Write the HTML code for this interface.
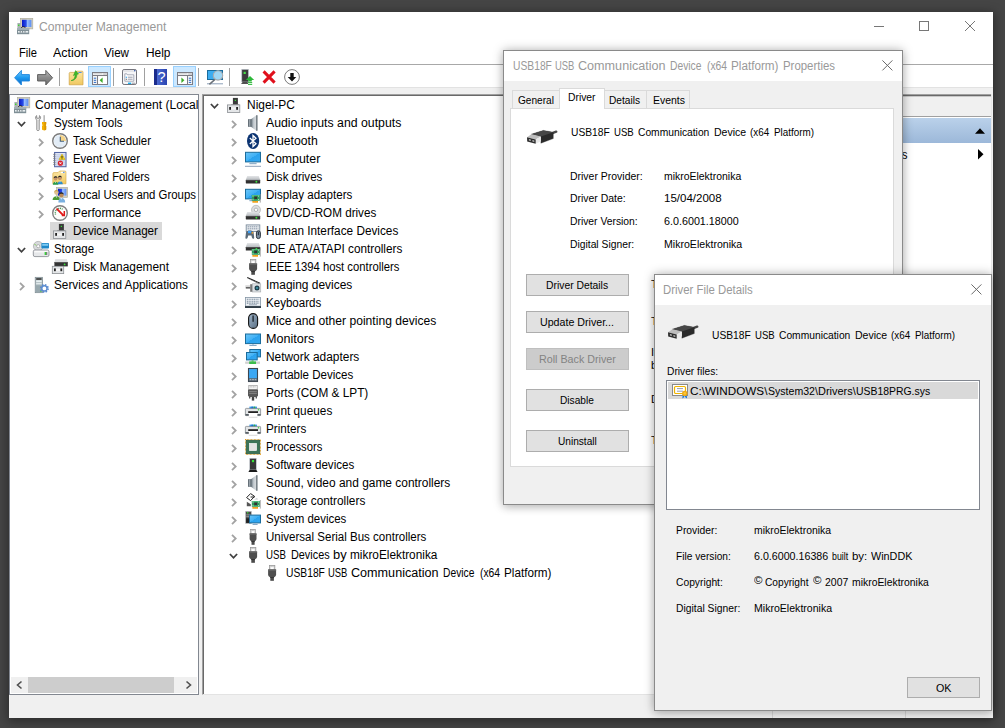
<!DOCTYPE html>
<html><head><meta charset="utf-8"><title>Computer Management</title>
<style>
html,body{margin:0;padding:0}
body{width:1005px;height:728px;overflow:hidden;background:#454545;position:relative;font-family:"Liberation Sans",sans-serif}
#win{position:absolute;left:9px;top:12px;width:984px;height:706px;background:#fff;box-shadow:0 2px 10px 1px rgba(0,0,0,.4)}
.t{position:absolute;white-space:nowrap;line-height:16px;height:16px;color:#000;transform-origin:0 50%}
.t.s{font-size:12px}
.t.d{font-size:11px}
.ic{position:absolute;overflow:visible}
div.ic{width:16px;height:16px}
.hl{position:absolute;height:1px}
.dlg{position:absolute;background:#f0f0f0;border:1px solid #8a8a8a;box-sizing:border-box;box-shadow:0 0 10px rgba(0,0,0,.28),0 3px 8px rgba(0,0,0,.1)}
.tbar{background:#fff}
.btn{position:absolute;box-sizing:border-box;background:#e1e1e1;border:1px solid #adadad;font-size:11px;line-height:20px;text-align:center;color:#000}
.btn.dis{background:#cccccc;border-color:#bfbfbf;color:#838383}
.desc{position:absolute;font-size:11px;line-height:13px;white-space:nowrap;color:#000}
</style></head>
<body>

<svg width="0" height="0" style="position:absolute"><defs>
<linearGradient id="gScr" x1="0" y1="0" x2="1" y2="0"><stop offset="0" stop-color="#0818c8"/><stop offset=".45" stop-color="#2a50e8"/><stop offset=".55" stop-color="#9cc0ff"/><stop offset="1" stop-color="#5a8cf0"/></linearGradient>
<linearGradient id="gBlue" x1="0" y1="0" x2="1" y2="1"><stop offset="0" stop-color="#6cc6f8"/><stop offset=".5" stop-color="#3fb0f5"/><stop offset=".5" stop-color="#2aa2ee"/><stop offset="1" stop-color="#35a8f0"/></linearGradient>
<linearGradient id="gBack" x1="0" y1="0" x2="0" y2="1"><stop offset="0" stop-color="#7fd0ff"/><stop offset=".5" stop-color="#1e9af0"/><stop offset="1" stop-color="#0a62c0"/></linearGradient>
<linearGradient id="gFwd" x1="0" y1="0" x2="0" y2="1"><stop offset="0" stop-color="#b8b8b8"/><stop offset=".5" stop-color="#8a8a8a"/><stop offset="1" stop-color="#6e6e6e"/></linearGradient>
<linearGradient id="gFold" x1="0" y1="0" x2="0" y2="1"><stop offset="0" stop-color="#fbe7a6"/><stop offset="1" stop-color="#f0c860"/></linearGradient>
<linearGradient id="gSpk" x1="0" y1="0" x2="1" y2="0"><stop offset="0" stop-color="#5c6870"/><stop offset=".35" stop-color="#b8c0c6"/><stop offset=".7" stop-color="#d8dcdf"/><stop offset="1" stop-color="#6a747a"/></linearGradient>
<linearGradient id="gDiskTop" x1="0" y1="0" x2="0" y2="1"><stop offset="0" stop-color="#e4e6e8"/><stop offset="1" stop-color="#b8bcc0"/></linearGradient>
<linearGradient id="gMouse" x1="0" y1="0" x2="1" y2="1"><stop offset="0" stop-color="#9fb4c8"/><stop offset="1" stop-color="#5a6f84"/></linearGradient>
<linearGradient id="gHelp" x1="0" y1="0" x2="1" y2="0"><stop offset="0" stop-color="#1b2c8c"/><stop offset=".22" stop-color="#1b2c8c"/><stop offset=".23" stop-color="#4a68d0"/><stop offset="1" stop-color="#2a44b0"/></linearGradient>
<linearGradient id="gUsb" x1="0" y1="0" x2="0" y2="1"><stop offset="0" stop-color="#555"/><stop offset="1" stop-color="#222"/></linearGradient>
</defs></svg>

<div id="win"></div>
<svg class="ic" style="left:17px;top:18px" width="16" height="16" viewBox="0 0 16 16"><rect x="3.4" y=".3" width="12.4" height="10.6" fill="#d2cfc0" stroke="#aaa898" stroke-width=".6"/><rect x="5" y="1.8" width="9.4" height="7.2" fill="url(#gScr)"/><rect x=".4" y="5" width="3.2" height="5.4" fill="#a8b0b2"/><rect x="1" y="6.6" width="1.4" height="1.4" fill="#3adb2a"/><path d="M4 10.2c1-2 3.6-2 4.6 0" fill="none" stroke="#222" stroke-width="1"/><rect x="0" y="10.2" width="12.2" height="6" fill="#7f8f96"/><rect x="0" y="10.2" width="12.2" height="1.6" fill="#a9b6bb"/><rect x="1" y="13" width="10.2" height="1.6" fill="#e8eef0"/><path d="M3.2 13v1.600M5.600 13v1.600M8 13v1.600" stroke="#5a686e" stroke-width=".8"/></svg>
<span class="t s" style="left:38.5px;top:19px;transform:scaleX(1.0113);color:#999;">Computer Management</span>
<svg class="ic" style="left:860px;top:12px" width="133" height="30" viewBox="0 0 133 30"><g fill="none" stroke="#777" stroke-width="1"><path d="M14 14.5h10"/><rect x="59.5" y="9.5" width="9" height="9"/><path d="M105 9l10 10M115 9l-10 10"/></g></svg>
<span class="t s" style="left:19.3px;top:44.5px;transform:scaleX(0.9305);">File</span>
<span class="t s" style="left:53px;top:44.5px;transform:scaleX(1.0432);">Action</span>
<span class="t s" style="left:104px;top:44.5px;transform:scaleX(0.9691);">View</span>
<span class="t s" style="left:145.5px;top:44.5px;transform:scaleX(0.9924);">Help</span>
<div class="hl" style="left:9px;top:64px;width:984px;background:#a8a8a8"></div>
<div style="position:absolute;left:9px;top:65px;width:984px;height:22px;background:#fff"></div>
<div style="position:absolute;left:9px;top:87px;width:984px;height:8px;background:#f0f0f0;border-top:1px solid #e2e2e2;box-sizing:border-box"></div>
<div style="position:absolute;left:88px;top:66px;width:23px;height:21px;background:#cce8ff;border:1px solid #99d1ff;box-sizing:border-box"></div>
<div style="position:absolute;left:173px;top:66px;width:23px;height:21px;background:#cce8ff;border:1px solid #99d1ff;box-sizing:border-box"></div>
<div style="position:absolute;left:59px;top:68px;width:1px;height:18px;background:#a0a0a0"></div>
<div style="position:absolute;left:113px;top:68px;width:1px;height:18px;background:#a0a0a0"></div>
<div style="position:absolute;left:144px;top:68px;width:1px;height:18px;background:#a0a0a0"></div>
<div style="position:absolute;left:198px;top:68px;width:1px;height:18px;background:#a0a0a0"></div>
<div style="position:absolute;left:229px;top:68px;width:1px;height:18px;background:#a0a0a0"></div>
<svg class="ic" style="left:14px;top:69px" width="16" height="16" viewBox="0 0 16 16"><path d="M.6 8.800L7.400 1.400V5.600H15.400V12H7.400V16z" fill="url(#gBack)" stroke="#1c84dc" stroke-width=".9" stroke-linejoin="round"/></svg>
<svg class="ic" style="left:37px;top:69px" width="16" height="16" viewBox="0 0 16 16"><path d="M15.600 8.800L8.800 1.400V5.600H.6V12H8.800V16z" fill="url(#gFwd)" stroke="#555" stroke-width=".9" stroke-linejoin="round"/></svg>
<svg class="ic" style="left:68px;top:69px" width="16" height="16" viewBox="0 0 16 16"><path d="M1.200 4.400c0-.6.4-1 1-1h5.200l1.400-1.200h5.400c.6 0 .8 .4 .8 1V15.800H1.200z" fill="url(#gFold)" stroke="#cfa040" stroke-width=".7"/><rect x="10.400" y="3" width="3.200" height="1" fill="#4c8ce8"/><path d="M3 11.600c3-.6 4.200-3 4-5.800L5.400 6.600 7.600 1.600 10.600 5 8.800 5.400C9.200 8.800 6.400 11.800 3 11.600z" fill="#3cb82c" stroke="#2c9c20" stroke-width=".5"/></svg>
<svg class="ic" style="left:92px;top:69px" width="16" height="16" viewBox="0 0 16 16"><rect x=".5" y="3.500" width="15" height="12" fill="#f4f4f4" stroke="#7c7c84" stroke-width="1"/><path d="M.5 6.500h15" stroke="#7c7c84" stroke-width="1"/><path d="M1.400 4.800h9" stroke="#c8c8cc" stroke-width=".9"/><path d="M11.600 4.300h1.200v1.200h-1.200zM13.600 4.300h1.200v1.200h-1.200z" fill="#fff" stroke="#9a9aa0" stroke-width=".4"/><path d="M5.500 7v8.500" stroke="#7c7c84" stroke-width="1"/><path d="M1.800 9.200h2.400M1.800 11.300h2.400M1.800 13.400h2.400" stroke="#2c6cc8" stroke-width="1"/><rect x="6.400" y="7.400" width="8.600" height="7.600" fill="#fff"/><path d="M10.600 8.600v5.400L7.600 11.300z" fill="#3cac28"/></svg>
<svg class="ic" style="left:121px;top:69px" width="16" height="16" viewBox="0 0 16 16"><rect x="1.500" y=".5" width="14" height="15" rx="1.600" fill="#f6f6f8" stroke="#74747c" stroke-width="1"/><path d="M2.400 2h11" stroke="#d0d0d6" stroke-width=".9"/><rect x="13" y="1" width="1.400" height="1.400" fill="#4c6cb0"/><path d="M3.800 12.200V4.800h2l.6 1h6.400v6.400z" fill="#fff" stroke="#9498a8" stroke-width=".8"/><path d="M6.800 8.200h4.800M6.800 10.200h4.800" stroke="#8c90a0" stroke-width=".9"/><rect x="4.800" y="7.700" width="1.100" height="1.100" fill="#1c9cf0"/><rect x="4.800" y="9.700" width="1.100" height="1.100" fill="#666"/><rect x="7" y="13.600" width="3.200" height="1.400" fill="#1cb0f0"/><rect x="11" y="13.600" width="3" height="1.400" fill="#b8b8bc"/></svg>
<svg class="ic" style="left:153px;top:69px" width="16" height="16" viewBox="0 0 16 16"><rect x="1" y="0" width="13" height="16" fill="url(#gHelp)"/><text x="8.600" y="13.400" font-family="Liberation Sans, sans-serif" font-size="14.500" fill="#fff" text-anchor="middle">?</text></svg>
<svg class="ic" style="left:177px;top:69px" width="16" height="16" viewBox="0 0 16 16"><rect x=".5" y="3.500" width="15" height="12" fill="#f4f4f4" stroke="#7c7c84" stroke-width="1"/><path d="M.5 6.500h15" stroke="#7c7c84" stroke-width="1"/><path d="M1.400 4.800h9" stroke="#c8c8cc" stroke-width=".9"/><path d="M11.600 4.300h1.200v1.200h-1.200zM13.600 4.300h1.200v1.200h-1.200z" fill="#fff" stroke="#9a9aa0" stroke-width=".4"/><path d="M10.500 7v8.500" stroke="#7c7c84" stroke-width="1"/><path d="M11.800 9.200h2.400M11.800 11.300h2.400M11.800 13.400h2.400" stroke="#2c6cc8" stroke-width="1"/><rect x="1.200" y="7.400" width="8.600" height="7.600" fill="#fff"/><path d="M4.400 8.600v5.400L7.400 11.300z" fill="#3cac28"/></svg>
<svg class="ic" style="left:207px;top:69px" width="16" height="16" viewBox="0 0 16 16"><rect x=".5" y="1.500" width="15" height="9" fill="#3cacf0" stroke="#1b6c9c" stroke-width="1"/><path d="M0 14.800h16" stroke="#8ca0b8" stroke-width="1"/><path d="M2.400 15.400L8 10.400" stroke="#6a7078" stroke-width="1.500"/><circle cx="11" cy="6.400" r="4.700" fill="#a8daf6" stroke="#a8acb0" stroke-width="1.100" fill-opacity=".92"/></svg>
<svg class="ic" style="left:240px;top:69px" width="16" height="16" viewBox="0 0 16 16"><rect x="1.800" y=".4" width="6.600" height="12.600" fill="#3c3c3c" stroke="#b8c0c8" stroke-width=".6"/><rect x="3.600" y="2.800" width="2.200" height="2.200" fill="#48e048"/><path d="M1 14.800l1.600-1.600h5l.6 1.600z" fill="#1a1a1a"/><path d="M10 7l4.200 4H11.800v1.400H8.200V11H5.800z" fill="#2cb838"/><path d="M8 13.600h4.200M8 15.400h4.200" stroke="#2cb838" stroke-width="1"/></svg>
<svg class="ic" style="left:261px;top:69px" width="16" height="16" viewBox="0 0 16 16"><path d="M2.600 2.400L13.600 13.600M13.600 2.400L2.600 13.600" stroke="#e0101c" stroke-width="3"/></svg>
<svg class="ic" style="left:284px;top:69px" width="16" height="16" viewBox="0 0 16 16"><circle cx="8" cy="8" r="7.400" fill="#fff" stroke="#5a5a5a" stroke-width=".8"/><path d="M6.300 4h3.400v4h2.600L8 12.600 3.700 8h2.600z" fill="#111"/></svg>
<div style="position:absolute;left:9px;top:94px;width:190px;height:601px;background:#fff;border:1px solid #828790;box-sizing:border-box"></div>
<div style="position:absolute;left:199px;top:94px;width:4px;height:601px;background:#f0f0f0"></div>
<div style="position:absolute;left:202px;top:94px;width:791px;height:601px;background:#fff;border:1px solid #a0a0a0;border-right:0;border-bottom-color:#e3e3e3;box-sizing:border-box;box-shadow:inset 1px 1px 0 #696969"></div>
<div style="position:absolute;left:9px;top:695px;width:984px;height:23px;background:#f0f0f0"></div>
<div style="position:absolute;left:772px;top:697px;width:1px;height:21px;background:#d7d7d7"></div>
<div style="position:absolute;left:905px;top:697px;width:1px;height:21px;background:#d7d7d7"></div>
<div style="position:absolute;left:11px;top:677px;width:186px;height:16px;background:#f0f0f0"></div>
<div style="position:absolute;left:28px;top:677px;width:146px;height:16px;background:#cdcdcd"></div>
<svg class="ic" style="left:11px;top:677px" width="186" height="16" viewBox="0 0 186 16"><g fill="none" stroke="#505050" stroke-width="1.6"><path d="M10.5 4.5L6.5 8l4 3.5"/><path d="M175.5 4.5l4 3.5-4 3.5"/></g></svg>
<div style="position:absolute;left:10px;top:95px;width:188px;height:582px;overflow:hidden">
<svg class="ic" style="left:4px;top:2px" width="16" height="16" viewBox="0 0 16 16"><rect x="3.4" y=".3" width="12.4" height="10.6" fill="#d2cfc0" stroke="#aaa898" stroke-width=".6"/><rect x="5" y="1.8" width="9.4" height="7.2" fill="url(#gScr)"/><rect x=".4" y="5" width="3.2" height="5.4" fill="#a8b0b2"/><rect x="1" y="6.6" width="1.4" height="1.4" fill="#3adb2a"/><path d="M4 10.2c1-2 3.6-2 4.6 0" fill="none" stroke="#222" stroke-width="1"/><rect x="0" y="10.2" width="12.2" height="6" fill="#7f8f96"/><rect x="0" y="10.2" width="12.2" height="1.6" fill="#a9b6bb"/><rect x="1" y="13" width="10.2" height="1.6" fill="#e8eef0"/><path d="M3.2 13v1.600M5.600 13v1.600M8 13v1.600" stroke="#5a686e" stroke-width=".8"/></svg>
<span class="t s" style="left:25px;top:1.5px;transform:scaleX(1.0081);">Computer Management (Local</span>
<svg class="ic" style="left:23px;top:20px" width="16" height="16" viewBox="0 0 16 16"><path d="M3.700 .6C2.400 1.200 2.100 3 3.100 4.300L3.800 5V14.800c0 1.100 2.400 1.100 2.400 0V5l.8-.7C8 3 7.700 1.200 6.400 .6V3.200H3.700z" fill="#ececec" stroke="#868686" stroke-width=".9"/><rect x="10.600" y=".2" width="1" height="7.200" fill="#8e8e8e"/><path d="M9 6.900h4.200v2.300l-.7 .9.700 .9v3.300c0 1.400-4.200 1.400-4.200 0V11l.7-.9-.7-.9z" fill="#f4b000"/><path d="M11.400 6.900h1.800v2.300l-.7 .9.700 .9v3.300c0 .7-.9 1-1.800 1.100z" fill="#d89400"/></svg>
<svg class="ic" style="left:7px;top:25.5px" width="10" height="6" viewBox="0 0 10 6"><path d="M0.900 1L4.500 4.800L8.100 1" fill="none" stroke="#404040" stroke-width="1.800"/></svg>
<span class="t s" style="left:44px;top:19.5px;transform:scaleX(0.9629);">System Tools</span>
<svg class="ic" style="left:42px;top:38px" width="16" height="16" viewBox="0 0 16 16"><circle cx="8" cy="8" r="7.300" fill="#f4f8fc" stroke="#7c7c7c" stroke-width="1.400"/><circle cx="8" cy="8" r="6" fill="#e2ecf6"/><path d="M8 8V2h.2A6 6 0 0 1 14 8z" fill="#f6d488"/><circle cx="8" cy="8" r="4.600" fill="none" stroke="#fff" stroke-width=".01"/><path d="M8.300 3.800V8.300H12" fill="none" stroke="#44607c" stroke-width="1.100"/></svg>
<svg class="ic" style="left:28px;top:43px" width="6" height="10" viewBox="0 0 6 10"><path d="M1 0.900L4.700 4.500L1 8.100" fill="none" stroke="#a3a3a3" stroke-width="1.800"/></svg>
<span class="t s" style="left:63px;top:37.5px;transform:scaleX(0.9507);">Task Scheduler</span>
<svg class="ic" style="left:42px;top:56px" width="16" height="16" viewBox="0 0 16 16"><g transform="translate(0,.9)"><rect x="2.600" y=".6" width="11.400" height="14.200" fill="#e6ecf8" stroke="#5668a6" stroke-width="1.100"/><path d="M4 3h9M4 5h9M4 7h9M4 9h9M4 11h9M4 13h9" stroke="#a8b6da" stroke-width=".8"/><path d="M1.400 2.500h2M1.400 4.500h2M1.400 6.500h2M1.400 8.500h2M1.400 10.500h2M1.400 12.500h2" stroke="#777" stroke-width="1"/><path d="M10 2.200L13.100 7.600H6.900z" fill="#f4d21c" stroke="#c8a400" stroke-width=".5"/><path d="M10 4v2" stroke="#222" stroke-width="1"/><circle cx="10" cy="6.900" r=".5" fill="#222"/><circle cx="8.400" cy="11.300" r="2.600" fill="#d8202c"/><path d="M7.400 10.300l2 2M9.400 10.300l-2 2" stroke="#fff" stroke-width=".9"/></g></svg>
<svg class="ic" style="left:28px;top:61px" width="6" height="10" viewBox="0 0 6 10"><path d="M1 0.900L4.700 4.500L1 8.100" fill="none" stroke="#a3a3a3" stroke-width="1.800"/></svg>
<span class="t s" style="left:63px;top:55.5px;transform:scaleX(0.9506);">Event Viewer</span>
<svg class="ic" style="left:42px;top:74px" width="16" height="16" viewBox="0 0 16 16"><g transform="translate(0,1.200)"><path d="M.8 3.600c0-.8.4-1.200 1.200-1.200h4l1.600-1.600h5.400c.6 0 1 .4 1 1V13.600H.8z" fill="url(#gFold)" stroke="#d4a43c" stroke-width=".6"/><rect x="8.800" y="1.500" width="4" height="1.300" rx=".5" fill="#fff"/><rect x="11" y="1.600" width="1.600" height="1" fill="#3c82e6"/><circle cx="3.600" cy="8.400" r="1.900" fill="#c89468"/><path d="M1.700 8c0-2.600 3.800-2.600 3.800 0-.6-1-3.200-1-3.800 0z" fill="#222"/><path d="M.8 14.600c0-4 5.600-4 5.600 0z" fill="#2a9c4c"/><circle cx="7.900" cy="8" r="1.900" fill="#c89468"/><path d="M6 7.600c0-2.600 3.800-2.600 3.800 0-.6-1-3.200-1-3.800 0z" fill="#222"/><path d="M5.600 14c0-4 5.200-4 5.200 0z" fill="#2a8ccc"/><path d="M3 11.500l.6 1.500.6-1.500zM7.400 11l.6 1.500.6-1.500z" fill="#fff"/></g></svg>
<svg class="ic" style="left:28px;top:79px" width="6" height="10" viewBox="0 0 6 10"><path d="M1 0.900L4.700 4.500L1 8.100" fill="none" stroke="#a3a3a3" stroke-width="1.800"/></svg>
<span class="t s" style="left:63px;top:73.5px;transform:scaleX(0.9324);">Shared Folders</span>
<svg class="ic" style="left:42px;top:92px" width="16" height="16" viewBox="0 0 16 16"><rect x="4.600" y=".4" width="11" height="10" fill="#d2cfc0" stroke="#aaa898" stroke-width=".6"/><rect x="6" y="1.800" width="8.400" height="6.800" fill="url(#gScr)"/><circle cx="4.400" cy="5.600" r="2.200" fill="#e0c090"/><path d="M2.200 5.200c0-3 4.400-3 4.400 0-.8-1.200-3.600-1.200-4.400 0z" fill="#c8a040"/><path d="M.6 13c0-5 7.400-5 7.400 0z" fill="#4c9a34"/><circle cx="9.400" cy="8" r="2.300" fill="#b88858"/><path d="M7.100 7.600c0-3.200 4.600-3.200 4.600 0-.8-1.200-3.800-1.200-4.600 0z" fill="#222"/><path d="M6.400 15.400c-.6-6 7-6 6.800 0z" fill="#7ab0e0"/><path d="M3.800 9.400l.6 1.600.6-1.600zM8.800 11.200l.6 1.600.6-1.600z" fill="#fff"/></svg>
<svg class="ic" style="left:28px;top:97px" width="6" height="10" viewBox="0 0 6 10"><path d="M1 0.900L4.700 4.500L1 8.100" fill="none" stroke="#a3a3a3" stroke-width="1.800"/></svg>
<span class="t s" style="left:63px;top:91.5px;transform:scaleX(0.9505);">Local Users and Groups</span>
<svg class="ic" style="left:42px;top:110px" width="16" height="16" viewBox="0 0 16 16"><circle cx="8" cy="8" r="7.300" fill="#fdfdfb" stroke="#808080" stroke-width="1.400"/><path d="M3.600 9.600A4.600 4.600 0 0 1 10.600 4.200" fill="none" stroke="#3c8c4c" stroke-width="1.400" stroke-dasharray="1 .8"/><path d="M12.300 6v4.400H9.800" fill="none" stroke="#e01818" stroke-width="1.500"/><path d="M4.600 3.600L11.400 10.400" stroke="#e01818" stroke-width="1.900"/></svg>
<svg class="ic" style="left:28px;top:115px" width="6" height="10" viewBox="0 0 6 10"><path d="M1 0.900L4.700 4.500L1 8.100" fill="none" stroke="#a3a3a3" stroke-width="1.800"/></svg>
<span class="t s" style="left:63px;top:109.5px;transform:scaleX(0.9898);">Performance</span>
<div style="position:absolute;left:40px;top:127px;width:112px;height:18px;background:#d9d9d9"></div>
<svg class="ic" style="left:42px;top:128px" width="16" height="16" viewBox="0 0 16 16"><rect x="6.900" y=".9" width="5" height="7" fill="#3a3a3a"/><rect x="8.800" y="2.800" width="1.200" height="1.200" fill="#38e038"/><path d="M5.200 7.700h8" stroke="#777" stroke-width=".8"/><rect x="1.400" y="7.900" width="12.400" height="7.600" fill="#e4e6e8" stroke="#8c9094" stroke-width=".8"/><rect x="3.200" y="10" width="1.800" height="2.800" fill="#222"/><rect x="10.200" y="10" width="1.800" height="2.800" fill="#222"/><rect x="5.400" y="10.600" width="4.400" height="1.800" fill="#f6f6f6"/></svg>
<span class="t s" style="left:63px;top:127.5px;transform:scaleX(0.9728);">Device Manager</span>
<svg class="ic" style="left:23px;top:146px" width="16" height="16" viewBox="0 0 16 16"><circle cx="5.200" cy="5.200" r="4.800" fill="#d8dadc" stroke="#9a9c9e" stroke-width=".6"/><circle cx="5.200" cy="5.200" r="1.600" fill="#fff" stroke="#8a8c8e" stroke-width=".6"/><path d="M1.400 3.400l2 .8" stroke="#7ccc50" stroke-width=".8"/><rect x="8.400" y="2" width="7.600" height="5.600" rx=".8" fill="#1e88c8"/><rect x="9.200" y="2.800" width="6" height="2" fill="#7cc8f0"/><rect x=".3" y="9" width="15.700" height="6.600" rx="1.600" fill="#e6e8ea" stroke="#80848a" stroke-width=".8"/><rect x="1.400" y="9.800" width="13.400" height="1.600" fill="#fafafa"/><rect x="11.600" y="11" width="1.800" height="3" fill="#3ccc3c"/><rect x="13.400" y="11" width=".8" height="3" fill="#555"/></svg>
<svg class="ic" style="left:7px;top:151.5px" width="10" height="6" viewBox="0 0 10 6"><path d="M0.900 1L4.500 4.800L8.100 1" fill="none" stroke="#404040" stroke-width="1.800"/></svg>
<span class="t s" style="left:44px;top:145.5px;transform:scaleX(0.9517);">Storage</span>
<svg class="ic" style="left:42px;top:164px" width="16" height="16" viewBox="0 0 16 16"><path d="M3.200 .2h11.600l1 3H2.400z" fill="#dcdee0"/><rect x="2.400" y="3.200" width="13.400" height="4.200" fill="#333"/><rect x="2.400" y="3.200" width="13.400" height=".8" fill="#555"/><circle cx="12.600" cy="5.400" r=".9" fill="#3ce03c"/><rect x=".3" y="7.300" width="11.400" height="7.300" fill="#e4e6e8" stroke="#8c9094" stroke-width=".8"/><rect x="2" y="9.400" width="1.800" height="2.800" fill="#222"/><rect x="8.400" y="9.400" width="1.800" height="2.800" fill="#222"/><rect x="4.200" y="10" width="3.800" height="1.800" fill="#f8f8f8"/></svg>
<span class="t s" style="left:63px;top:163.5px;transform:scaleX(0.9926);">Disk Management</span>
<svg class="ic" style="left:23px;top:182px" width="16" height="16" viewBox="0 0 16 16"><rect x="2.200" y=".3" width="7.400" height="15.400" fill="#b8c4c8" stroke="#7a888e" stroke-width=".7"/><rect x="3.200" y="1.200" width="5.400" height="1.600" fill="#333"/><rect x="3.200" y="3.400" width="5.400" height="1.600" fill="#e8f0f2"/><rect x="3.200" y="6" width="5.400" height="1.200" fill="#dfe8ea"/><rect x="2.600" y="8.200" width="6.600" height="7" fill="#98a8ae"/><rect x="7" y="13.400" width="1.600" height="1.200" fill="#40d040"/><circle cx="11.400" cy="11.400" r="3.400" fill="none" stroke="#5c8cd0" stroke-width="2.200" stroke-dasharray="1.400 1.270"/><circle cx="11.400" cy="11.400" r="2.600" fill="#fff" stroke="#5c8cd0" stroke-width="1.400"/></svg>
<svg class="ic" style="left:9px;top:187px" width="6" height="10" viewBox="0 0 6 10"><path d="M1 0.900L4.700 4.500L1 8.100" fill="none" stroke="#a3a3a3" stroke-width="1.800"/></svg>
<span class="t s" style="left:44px;top:181.5px;transform:scaleX(0.9799);">Services and Applications</span>
</div>
<svg class="ic" style="left:226px;top:97px" width="16" height="16" viewBox="0 0 16 16"><rect x="6.900" y=".9" width="5" height="7" fill="#3a3a3a"/><rect x="8.800" y="2.800" width="1.200" height="1.200" fill="#38e038"/><path d="M5.200 7.700h8" stroke="#777" stroke-width=".8"/><rect x="1.400" y="7.900" width="12.400" height="7.600" fill="#e4e6e8" stroke="#8c9094" stroke-width=".8"/><rect x="3.200" y="10" width="1.800" height="2.800" fill="#222"/><rect x="10.200" y="10" width="1.800" height="2.800" fill="#222"/><rect x="5.400" y="10.600" width="4.400" height="1.800" fill="#f6f6f6"/></svg>
<svg class="ic" style="left:210px;top:102.5px" width="10" height="6" viewBox="0 0 10 6"><path d="M0.900 1L4.500 4.800L8.100 1" fill="none" stroke="#404040" stroke-width="1.800"/></svg>
<span class="t s" style="left:246.7px;top:96.5px;transform:scaleX(0.9955);">Nigel-PC</span>
<svg class="ic" style="left:245px;top:115px" width="16" height="16" viewBox="0 0 16 16"><rect x="3" y="4.200" width="3.200" height="7.600" fill="#5a646c"/><rect x="3.800" y="4.200" width="1.600" height="7.600" fill="#98a2aa"/><path d="M6 4.200L11.400 .2h.9V15.800h-.9L6 11.800z" fill="url(#gSpk)"/><path d="M11.500 .2h.8V15.800h-.8z" fill="#59626a"/></svg>
<svg class="ic" style="left:231px;top:120.3px" width="6" height="10" viewBox="0 0 6 10"><path d="M1 0.900L4.700 4.500L1 8.100" fill="none" stroke="#a3a3a3" stroke-width="1.800"/></svg>
<span class="t s" style="left:265.7px;top:114.5px;transform:scaleX(1.0242);">Audio inputs and outputs</span>
<svg class="ic" style="left:245px;top:133px" width="16" height="16" viewBox="0 0 16 16"><ellipse cx="8.100" cy="8" rx="6.100" ry="8" fill="#0c3472"/><path d="M4.800 5l6.200 5.800L8 13.600V2.400l3 2.800L4.800 11" fill="none" stroke="#fff" stroke-width="1.300"/></svg>
<svg class="ic" style="left:231px;top:138.3px" width="6" height="10" viewBox="0 0 6 10"><path d="M1 0.900L4.700 4.500L1 8.100" fill="none" stroke="#a3a3a3" stroke-width="1.800"/></svg>
<span class="t s" style="left:265.7px;top:132.5px;transform:scaleX(1.0213);">Bluetooth</span>
<svg class="ic" style="left:245px;top:151px" width="16" height="16" viewBox="0 0 16 16"><g transform="translate(0,.8)"><rect x=".5" y=".5" width="15" height="9.600" fill="url(#gBlue)" stroke="#1b6c9c" stroke-width="1"/><path d="M4.400 11.900h7.200" stroke="#6a94b8" stroke-width=".9"/><path d="M7.400 10.600h1.200v1.200H7.400z" fill="#9ab4cc"/><path d="M0 14.500h16" stroke="#8ca0b8" stroke-width="1"/></g></svg>
<svg class="ic" style="left:231px;top:156.3px" width="6" height="10" viewBox="0 0 6 10"><path d="M1 0.900L4.700 4.500L1 8.100" fill="none" stroke="#a3a3a3" stroke-width="1.800"/></svg>
<span class="t s" style="left:265.7px;top:150.5px;transform:scaleX(1.0306);">Computer</span>
<svg class="ic" style="left:245px;top:169px" width="16" height="16" viewBox="0 0 16 16"><g transform="translate(0,6.900)"><path d="M2.200 0h11.600l1.400 4H.8z" fill="url(#gDiskTop)"/><rect x=".8" y="4" width="14.400" height="3.600" rx=".4" fill="#303030"/><rect x=".8" y="4" width="14.400" height=".8" fill="#555"/><circle cx="11.400" cy="5.900" r="1" fill="#3ce03c"/></g></svg>
<svg class="ic" style="left:231px;top:174.3px" width="6" height="10" viewBox="0 0 6 10"><path d="M1 0.900L4.700 4.500L1 8.100" fill="none" stroke="#a3a3a3" stroke-width="1.800"/></svg>
<span class="t s" style="left:265.7px;top:168.5px;transform:scaleX(0.9593);">Disk drives</span>
<svg class="ic" style="left:245px;top:187px" width="16" height="16" viewBox="0 0 16 16"><g transform="translate(0,1.800)"><rect x=".5" y=".5" width="15" height="9.600" fill="url(#gBlue)" stroke="#1b6c9c" stroke-width="1"/><path d="M4.400 11.900h7.200" stroke="#6a94b8" stroke-width=".9"/><path d="M7.400 10.600h1.200v1.200H7.400z" fill="#9ab4cc"/></g><g transform="translate(0,1.600)"><path d="M15.300 5.400V14" stroke="#8a8a8a" stroke-width=".7"/><rect x="6.800" y="6.400" width="8" height="5.800" fill="#2e9c5c"/><rect x="6.800" y="6.400" width="8" height="1" fill="#4cb878"/><rect x="9.200" y="8" width="3" height="2.400" fill="#333"/><path d="M8 7.600h.01M13.400 7.600h.01M8 11h.01M13.400 11h.01" stroke="#d8e8d8" stroke-width="1" stroke-linecap="round"/><rect x="7.400" y="12.400" width="5.600" height="1.700" fill="#f09c10"/><path d="M9.200 12.400v1.700M11.100 12.400v1.700" stroke="#f8c860" stroke-width=".4"/></g></svg>
<svg class="ic" style="left:231px;top:192.3px" width="6" height="10" viewBox="0 0 6 10"><path d="M1 0.900L4.700 4.500L1 8.100" fill="none" stroke="#a3a3a3" stroke-width="1.800"/></svg>
<span class="t s" style="left:265.7px;top:186.5px;transform:scaleX(0.9654);">Display adapters</span>
<svg class="ic" style="left:245px;top:205px" width="16" height="16" viewBox="0 0 16 16"><circle cx="11" cy="4.800" r="4.500" fill="#dcdee0" stroke="#a4a6a8" stroke-width=".6"/><circle cx="11" cy="4.800" r="1.700" fill="#fff" stroke="#9a9c9e" stroke-width=".7"/><g transform="translate(0,6.900)"><path d="M2.200 0h11.600l1.400 4H.8z" fill="url(#gDiskTop)"/><rect x=".8" y="4" width="14.400" height="3.600" rx=".4" fill="#303030"/><rect x=".8" y="4" width="14.400" height=".8" fill="#555"/><circle cx="11.400" cy="5.900" r="1" fill="#3ce03c"/></g></svg>
<svg class="ic" style="left:231px;top:210.3px" width="6" height="10" viewBox="0 0 6 10"><path d="M1 0.900L4.700 4.500L1 8.100" fill="none" stroke="#a3a3a3" stroke-width="1.800"/></svg>
<span class="t s" style="left:265.7px;top:204.5px;transform:scaleX(0.9731);">DVD/CD-ROM drives</span>
<svg class="ic" style="left:245px;top:223px" width="16" height="16" viewBox="0 0 16 16"><g transform="translate(0,1.400)"><rect x="1.200" y=".5" width="13.600" height="6.600" fill="#e8ecf0" stroke="#7c8c9c" stroke-width=".9"/><path d="M2.600 2.400h10.800M2.600 4.400h10.800" stroke="#8a98a8" stroke-width="1" stroke-dasharray="1.400 .6"/><path d="M1 8c1-2.400 6.600-2.400 7.600 0l.6 5c.2 1.600-1.600 1.800-2.200 .4L6.400 11H3.200l-.6 2.400c-.6 1.400-2.400 1.200-2.200-.4z" fill="#5a6a78"/><rect x="3" y="6.400" width="3.200" height="2.400" fill="#3c9cf0"/><circle cx="7.400" cy="8.400" r=".9" fill="#f0a030"/><rect x="11.400" y="6.400" width="4" height="7.800" rx="2" fill="#7c8ea0" stroke="#1c2630" stroke-width=".9"/><path d="M13.400 7.400v3.400" stroke="#1c2630" stroke-width=".9"/></g></svg>
<svg class="ic" style="left:231px;top:228.3px" width="6" height="10" viewBox="0 0 6 10"><path d="M1 0.900L4.700 4.500L1 8.100" fill="none" stroke="#a3a3a3" stroke-width="1.800"/></svg>
<span class="t s" style="left:265.7px;top:222.5px;transform:scaleX(0.9819);">Human Interface Devices</span>
<svg class="ic" style="left:245px;top:241px" width="16" height="16" viewBox="0 0 16 16"><g transform="translate(0,2)"><path d="M2.200 0h11.600l1.400 4H.8z" fill="url(#gDiskTop)"/><rect x=".8" y="4" width="14.400" height="3.600" rx=".4" fill="#303030"/><rect x=".8" y="4" width="14.400" height=".8" fill="#555"/><circle cx="11.400" cy="5.900" r="1" fill="#3ce03c"/></g><g transform="translate(0,1.600)"><path d="M15.300 5.400V14" stroke="#8a8a8a" stroke-width=".7"/><rect x="6.800" y="6.400" width="8" height="5.800" fill="#2e9c5c"/><rect x="6.800" y="6.400" width="8" height="1" fill="#4cb878"/><rect x="9.200" y="8" width="3" height="2.400" fill="#333"/><path d="M8 7.600h.01M13.400 7.600h.01M8 11h.01M13.400 11h.01" stroke="#d8e8d8" stroke-width="1" stroke-linecap="round"/><rect x="7.400" y="12.400" width="5.600" height="1.700" fill="#f09c10"/><path d="M9.200 12.400v1.700M11.100 12.400v1.700" stroke="#f8c860" stroke-width=".4"/></g></svg>
<svg class="ic" style="left:231px;top:246.3px" width="6" height="10" viewBox="0 0 6 10"><path d="M1 0.900L4.700 4.500L1 8.100" fill="none" stroke="#a3a3a3" stroke-width="1.800"/></svg>
<span class="t s" style="left:265.7px;top:240.5px;transform:scaleX(0.9795);">IDE ATA/ATAPI controllers</span>
<svg class="ic" style="left:245px;top:259px" width="16" height="16" viewBox="0 0 16 16"><g transform="translate(.5,0)"><rect x="4.800" y=".3" width="5.600" height="4.800" fill="#c8c8c8" stroke="#8c8c8c" stroke-width=".6"/><path d="M6 1.200l.9 1.200.7-1.200.7 1.200.9-1.200v3H6z" fill="#fff"/><path d="M3.600 4.400h8v5.200c0 1.800-1.600 2.600-2.200 2.800H5.800C5.200 12.200 3.600 11.400 3.600 9.600z" fill="#4e4e4e"/><path d="M3.600 4.400h8v1.400h-8z" fill="#666"/><rect x="5.800" y="12" width="3.600" height="3.800" fill="#4a4a4a"/><rect x="5.800" y="12" width="3.600" height="1" fill="#333"/></g></svg>
<svg class="ic" style="left:231px;top:264.3px" width="6" height="10" viewBox="0 0 6 10"><path d="M1 0.900L4.700 4.500L1 8.100" fill="none" stroke="#a3a3a3" stroke-width="1.800"/></svg>
<span class="t s" style="left:265.7px;top:258.5px;transform:scaleX(0.9382);">IEEE 1394 host controllers</span>
<svg class="ic" style="left:245px;top:277px" width="16" height="16" viewBox="0 0 16 16"><path d="M2.200 .4L15 6.200" stroke="#222" stroke-width="1.100"/><path d="M2.400 1.200L14.600 6.400l-.4 .8z" fill="#555"/><rect x=".4" y="8.200" width="5" height="2.400" fill="#d8d8d8"/><rect x=".8" y="10.400" width="4.600" height="1" fill="#111"/><rect x="5.200" y="7.200" width="2.400" height="7.600" fill="#777"/><rect x="7.400" y="6.800" width="8.400" height="8.200" fill="#dcdfe2" stroke="#9a9ea2" stroke-width=".5"/><circle cx="12" cy="11" r="2.500" fill="#1c3c48"/><circle cx="12" cy="11" r="1.300" fill="#3c8898"/></svg>
<svg class="ic" style="left:231px;top:282.3px" width="6" height="10" viewBox="0 0 6 10"><path d="M1 0.900L4.700 4.500L1 8.100" fill="none" stroke="#a3a3a3" stroke-width="1.800"/></svg>
<span class="t s" style="left:265.7px;top:276.5px;transform:scaleX(0.9952);">Imaging devices</span>
<svg class="ic" style="left:245px;top:295px" width="16" height="16" viewBox="0 0 16 16"><rect x=".4" y="2.400" width="15.200" height="8.800" fill="#eef2f6" stroke="#8494a4" stroke-width=".8"/><path d="M1.800 4.300h12.400M1.800 6.200h12.400M1.800 8.100h12.400" stroke="#7c8c9c" stroke-width="1.100" stroke-dasharray="1.200 .55"/><path d="M4 9.700h8" stroke="#9aa8b6" stroke-width=".9"/><rect x="0" y="11.200" width="16" height="1.700" fill="#1c2a34"/></svg>
<svg class="ic" style="left:231px;top:300.3px" width="6" height="10" viewBox="0 0 6 10"><path d="M1 0.900L4.700 4.500L1 8.100" fill="none" stroke="#a3a3a3" stroke-width="1.800"/></svg>
<span class="t s" style="left:265.7px;top:294.5px;transform:scaleX(0.9638);">Keyboards</span>
<svg class="ic" style="left:245px;top:313px" width="16" height="16" viewBox="0 0 16 16"><rect x="3.600" y=".6" width="9" height="14.800" rx="4.500" fill="url(#gMouse)" stroke="#111" stroke-width="1.100"/><path d="M8.100 2.400v6.400" stroke="#1a222a" stroke-width="1.300"/></svg>
<svg class="ic" style="left:231px;top:318.3px" width="6" height="10" viewBox="0 0 6 10"><path d="M1 0.900L4.700 4.500L1 8.100" fill="none" stroke="#a3a3a3" stroke-width="1.800"/></svg>
<span class="t s" style="left:265.7px;top:312.5px;transform:scaleX(1.0090);">Mice and other pointing devices</span>
<svg class="ic" style="left:245px;top:331px" width="16" height="16" viewBox="0 0 16 16"><g transform="translate(0,2.500)"><rect x=".5" y=".5" width="15" height="9.600" fill="url(#gBlue)" stroke="#1b6c9c" stroke-width="1"/><path d="M4.400 11.900h7.200" stroke="#6a94b8" stroke-width=".9"/><path d="M7.400 10.600h1.200v1.200H7.400z" fill="#9ab4cc"/></g></svg>
<svg class="ic" style="left:231px;top:336.3px" width="6" height="10" viewBox="0 0 6 10"><path d="M1 0.900L4.700 4.500L1 8.100" fill="none" stroke="#a3a3a3" stroke-width="1.800"/></svg>
<span class="t s" style="left:265.7px;top:330.5px;transform:scaleX(1.0496);">Monitors</span>
<svg class="ic" style="left:245px;top:349px" width="16" height="16" viewBox="0 0 16 16"><rect x="4.800" y=".5" width="10.700" height="7.400" fill="url(#gBlue)" stroke="#1b6c9c" stroke-width="1"/><rect x="1.500" y="3.500" width="10.700" height="7.400" fill="url(#gBlue)" stroke="#1b6c9c" stroke-width="1"/><rect x=".2" y="12.400" width="14.800" height="2.600" fill="#dcdcdc"/><path d="M.2 13.700h14.800" stroke="#c4c4c4" stroke-width=".6"/><rect x="4.200" y="12.400" width="6.800" height="2.600" fill="#3cbc4c"/><rect x="6.600" y="11.400" width="2" height="1.200" fill="#3cbc4c"/></svg>
<svg class="ic" style="left:231px;top:354.3px" width="6" height="10" viewBox="0 0 6 10"><path d="M1 0.900L4.700 4.500L1 8.100" fill="none" stroke="#a3a3a3" stroke-width="1.800"/></svg>
<span class="t s" style="left:265.7px;top:348.5px;transform:scaleX(0.9921);">Network adapters</span>
<svg class="ic" style="left:245px;top:367px" width="16" height="16" viewBox="0 0 16 16"><rect x="3.500" y="1.500" width="9" height="13" fill="#3ca8f4" stroke="#3c4650" stroke-width="1.100"/><rect x="4" y="11.200" width="8" height="3" fill="#5a6670"/><path d="M4.600 12.700h6.800" stroke="#a8b4be" stroke-width="1.200" stroke-dasharray="1.800 .7"/></svg>
<svg class="ic" style="left:231px;top:372.3px" width="6" height="10" viewBox="0 0 6 10"><path d="M1 0.900L4.700 4.500L1 8.100" fill="none" stroke="#a3a3a3" stroke-width="1.800"/></svg>
<span class="t s" style="left:265.7px;top:366.5px;transform:scaleX(0.9623);">Portable Devices</span>
<svg class="ic" style="left:245px;top:385px" width="16" height="16" viewBox="0 0 16 16"><rect x="3.800" y=".6" width="8.400" height="4" fill="#f4f4f4" stroke="#8c8c8c" stroke-width=".6"/><path d="M5.200 1v1.600M6.800 1v1.600M8.400 1v1.600M10 1v1.600" stroke="#aaa" stroke-width=".6"/><path d="M3 4.600h10v6.200l-1 1v1.600h-1.400V12H5.400v1.400H4V11.800l-1-1z" fill="#585858"/><path d="M4.200 6.600h7.600M4.200 8.400h7.600" stroke="#8a8a8a" stroke-width=".9"/><rect x="6.800" y="12" width="2.400" height="3.600" fill="#444"/></svg>
<svg class="ic" style="left:231px;top:390.3px" width="6" height="10" viewBox="0 0 6 10"><path d="M1 0.900L4.700 4.500L1 8.100" fill="none" stroke="#a3a3a3" stroke-width="1.800"/></svg>
<span class="t s" style="left:265.7px;top:384.5px;transform:scaleX(0.9835);">Ports (COM &amp; LPT)</span>
<svg class="ic" style="left:245px;top:403px" width="16" height="16" viewBox="0 0 16 16"><rect x="4.400" y="3.600" width="7.600" height="2.600" fill="#3c9cf0"/><rect x="6.400" y="3.600" width="1.600" height="2.600" fill="#1c70d0"/><rect x="8.600" y="3.600" width="1.600" height="2.600" fill="#2cb040"/><rect x=".4" y="5.400" width="15.200" height="7.200" rx=".8" fill="#e2e4e6" stroke="#767c82" stroke-width=".7"/><rect x="12.800" y="6.200" width="1.400" height="1.200" fill="#30d030"/><rect x="3.200" y="8.200" width="9.800" height="1.800" fill="#222"/><rect x=".4" y="11" width="15.200" height="1.700" fill="#5a6268"/><rect x="3.800" y="10" width="8.600" height="4.200" fill="#fff"/><path d="M3.800 14.300h8.600" stroke="#c0c0c0" stroke-width=".6"/></svg>
<svg class="ic" style="left:231px;top:408.3px" width="6" height="10" viewBox="0 0 6 10"><path d="M1 0.900L4.700 4.500L1 8.100" fill="none" stroke="#a3a3a3" stroke-width="1.800"/></svg>
<span class="t s" style="left:265.7px;top:402.5px;transform:scaleX(0.9838);">Print queues</span>
<svg class="ic" style="left:245px;top:421px" width="16" height="16" viewBox="0 0 16 16"><rect x="4.400" y="3.600" width="7.600" height="2.600" fill="#3c9cf0"/><rect x="6.400" y="3.600" width="1.600" height="2.600" fill="#1c70d0"/><rect x="8.600" y="3.600" width="1.600" height="2.600" fill="#2cb040"/><rect x=".4" y="5.400" width="15.200" height="7.200" rx=".8" fill="#e2e4e6" stroke="#767c82" stroke-width=".7"/><rect x="12.800" y="6.200" width="1.400" height="1.200" fill="#30d030"/><rect x="3.200" y="8.200" width="9.800" height="1.800" fill="#222"/><rect x=".4" y="11" width="15.200" height="1.700" fill="#5a6268"/><rect x="3.800" y="10" width="8.600" height="4.200" fill="#fff"/><path d="M3.800 14.300h8.600" stroke="#c0c0c0" stroke-width=".6"/></svg>
<svg class="ic" style="left:231px;top:426.3px" width="6" height="10" viewBox="0 0 6 10"><path d="M1 0.900L4.700 4.500L1 8.100" fill="none" stroke="#a3a3a3" stroke-width="1.800"/></svg>
<span class="t s" style="left:265.7px;top:420.5px;transform:scaleX(0.9748);">Printers</span>
<svg class="ic" style="left:245px;top:439px" width="16" height="16" viewBox="0 0 16 16"><rect x=".6" y=".6" width="14.800" height="14.800" fill="none" stroke="#e8a020" stroke-width="1.200" stroke-dasharray=".7 .7"/><rect x="1.300" y="1.300" width="13.400" height="13.400" fill="#3c7458" stroke="#2c5c44" stroke-width=".8"/><rect x="4.300" y="4.300" width="7.400" height="7.400" fill="#e4e4e4" stroke="#fff" stroke-width=".5"/></svg>
<svg class="ic" style="left:231px;top:444.3px" width="6" height="10" viewBox="0 0 6 10"><path d="M1 0.900L4.700 4.500L1 8.100" fill="none" stroke="#a3a3a3" stroke-width="1.800"/></svg>
<span class="t s" style="left:265.7px;top:438.5px;transform:scaleX(0.9378);">Processors</span>
<svg class="ic" style="left:245px;top:457px" width="16" height="16" viewBox="0 0 16 16"><rect x="4.700" y="1.300" width="6.600" height="11.600" fill="#383838" stroke="#cfd6de" stroke-width=".5"/><rect x="6.900" y="3" width="2.200" height="2.200" fill="#38e038"/><path d="M4.700 12.800h6.600l1.300 2.200H3.400z" fill="#1a1a1a"/></svg>
<svg class="ic" style="left:231px;top:462.3px" width="6" height="10" viewBox="0 0 6 10"><path d="M1 0.900L4.700 4.500L1 8.100" fill="none" stroke="#a3a3a3" stroke-width="1.800"/></svg>
<span class="t s" style="left:265.7px;top:456.5px;transform:scaleX(0.9662);">Software devices</span>
<svg class="ic" style="left:245px;top:475px" width="16" height="16" viewBox="0 0 16 16"><rect x="3" y="4.200" width="3.200" height="7.600" fill="#5a646c"/><rect x="3.800" y="4.200" width="1.600" height="7.600" fill="#98a2aa"/><path d="M6 4.200L11.400 .2h.9V15.800h-.9L6 11.800z" fill="url(#gSpk)"/><path d="M11.500 .2h.8V15.800h-.8z" fill="#59626a"/></svg>
<svg class="ic" style="left:231px;top:480.3px" width="6" height="10" viewBox="0 0 6 10"><path d="M1 0.900L4.700 4.500L1 8.100" fill="none" stroke="#a3a3a3" stroke-width="1.800"/></svg>
<span class="t s" style="left:265.7px;top:474.5px;transform:scaleX(0.9938);">Sound, video and game controllers</span>
<svg class="ic" style="left:245px;top:493px" width="16" height="16" viewBox="0 0 16 16"><path d="M5.600 .6L9.600 3.400 5.600 7.600 1.600 4.600z" fill="none" stroke="#222" stroke-width="1"/><path d="M5.600 4h4" stroke="#222" stroke-width="1"/><path d="M1.800 8.800l4 2.400v2H1.800z" fill="#555"/><path d="M9 6.400l3-1.400 1 1.400z" fill="#c8ccd0"/><g transform="translate(0,1.600)"><path d="M15.300 5.400V14" stroke="#8a8a8a" stroke-width=".7"/><rect x="6.800" y="6.400" width="8" height="5.800" fill="#2e9c5c"/><rect x="6.800" y="6.400" width="8" height="1" fill="#4cb878"/><rect x="9.200" y="8" width="3" height="2.400" fill="#333"/><path d="M8 7.600h.01M13.400 7.600h.01M8 11h.01M13.400 11h.01" stroke="#d8e8d8" stroke-width="1" stroke-linecap="round"/><rect x="7.400" y="12.400" width="5.600" height="1.700" fill="#f09c10"/><path d="M9.200 12.400v1.700M11.100 12.400v1.700" stroke="#f8c860" stroke-width=".4"/></g></svg>
<svg class="ic" style="left:231px;top:498.3px" width="6" height="10" viewBox="0 0 6 10"><path d="M1 0.900L4.700 4.500L1 8.100" fill="none" stroke="#a3a3a3" stroke-width="1.800"/></svg>
<span class="t s" style="left:265.7px;top:492.5px;transform:scaleX(0.9859);">Storage controllers</span>
<svg class="ic" style="left:245px;top:511px" width="16" height="16" viewBox="0 0 16 16"><rect x=".6" y=".4" width="5.800" height="12" fill="#4a4a4a" stroke="#c0c4c8" stroke-width=".5"/><rect x="2" y="1.200" width="1.400" height="1.200" fill="#38e038"/><rect x="1.200" y="3.400" width="4.600" height="1" fill="#9a9a9a"/><rect x="1.200" y="5.200" width="4.600" height="1" fill="#9a9a9a"/><rect x="1.200" y="7.400" width="3" height="4.400" fill="#222"/><rect x="4.500" y="4.100" width="11" height="7.800" fill="url(#gBlue)" stroke="#1b6c9c" stroke-width="1"/><path d="M7.600 13.400h5" stroke="#6a94b8" stroke-width=".9"/><rect x="9.500" y="12.400" width="1.200" height="1" fill="#9ab4cc"/></svg>
<svg class="ic" style="left:231px;top:516.3px" width="6" height="10" viewBox="0 0 6 10"><path d="M1 0.900L4.700 4.500L1 8.100" fill="none" stroke="#a3a3a3" stroke-width="1.800"/></svg>
<span class="t s" style="left:265.7px;top:510.5px;transform:scaleX(0.9556);">System devices</span>
<svg class="ic" style="left:245px;top:529px" width="16" height="16" viewBox="0 0 16 16"><g transform="translate(1.100,0) scale(.86,1)"><g transform="translate(.5,0)"><rect x="4.800" y=".3" width="5.600" height="4.800" fill="#c8c8c8" stroke="#8c8c8c" stroke-width=".6"/><path d="M6 1.200l.9 1.200.7-1.200.7 1.200.9-1.200v3H6z" fill="#fff"/><path d="M3.600 4.400h8v5.200c0 1.800-1.600 2.600-2.200 2.800H5.800C5.200 12.200 3.600 11.400 3.600 9.600z" fill="#4e4e4e"/><path d="M3.600 4.400h8v1.400h-8z" fill="#666"/><rect x="5.800" y="12" width="3.600" height="3.800" fill="#4a4a4a"/><rect x="5.800" y="12" width="3.600" height="1" fill="#333"/></g></g></svg>
<svg class="ic" style="left:231px;top:534.3px" width="6" height="10" viewBox="0 0 6 10"><path d="M1 0.900L4.700 4.500L1 8.100" fill="none" stroke="#a3a3a3" stroke-width="1.800"/></svg>
<span class="t s" style="left:265.7px;top:528.5px;transform:scaleX(0.9614);">Universal Serial Bus controllers</span>
<svg class="ic" style="left:245px;top:547px" width="16" height="16" viewBox="0 0 16 16"><g transform="translate(.5,0)"><rect x="4.800" y=".3" width="5.600" height="4.800" fill="#c8c8c8" stroke="#8c8c8c" stroke-width=".6"/><path d="M6 1.200l.9 1.200.7-1.200.7 1.200.9-1.200v3H6z" fill="#fff"/><path d="M3.600 4.400h8v5.200c0 1.800-1.600 2.600-2.200 2.800H5.800C5.200 12.200 3.600 11.400 3.600 9.600z" fill="#4e4e4e"/><path d="M3.600 4.400h8v1.400h-8z" fill="#666"/><rect x="5.800" y="12" width="3.600" height="3.800" fill="#4a4a4a"/><rect x="5.800" y="12" width="3.600" height="1" fill="#333"/></g></svg>
<svg class="ic" style="left:229px;top:552.5px" width="10" height="6" viewBox="0 0 10 6"><path d="M0.900 1L4.500 4.800L8.100 1" fill="none" stroke="#404040" stroke-width="1.800"/></svg>
<span class="t s" style="left:266.4px;top:546.5px;transform:scaleX(0.8061);">USB</span><span class="t s" style="left:290.7px;top:546.5px;transform:scaleX(0.9042);">Devices</span><span class="t s" style="left:333px;top:546.5px;transform:scaleX(1.0719);">by</span><span class="t s" style="left:350.4px;top:546.5px;transform:scaleX(0.9853);">mikroElektronika</span>
<svg class="ic" style="left:264px;top:565px" width="16" height="16" viewBox="0 0 16 16"><g transform="translate(.5,0)"><rect x="4.800" y=".3" width="5.600" height="4.800" fill="#c8c8c8" stroke="#8c8c8c" stroke-width=".6"/><path d="M6 1.200l.9 1.200.7-1.200.7 1.200.9-1.200v3H6z" fill="#fff"/><path d="M3.600 4.400h8v5.200c0 1.800-1.600 2.600-2.200 2.800H5.800C5.200 12.200 3.600 11.400 3.600 9.600z" fill="#4e4e4e"/><path d="M3.600 4.400h8v1.400h-8z" fill="#666"/><rect x="5.800" y="12" width="3.600" height="3.800" fill="#4a4a4a"/><rect x="5.800" y="12" width="3.600" height="1" fill="#333"/></g></svg>
<span class="t s" style="left:285.5px;top:564.5px;transform:scaleX(0.8576);">USB18F</span><span class="t s" style="left:328.4px;top:564.5px;transform:scaleX(0.7858);">USB</span><span class="t s" style="left:351.4px;top:564.5px;transform:scaleX(1.0507);">Communication</span><span class="t s" style="left:443.3px;top:564.5px;transform:scaleX(0.8559);">Device</span><span class="t s" style="left:479.8px;top:564.5px;transform:scaleX(0.8610);">(x64</span><span class="t s" style="left:504.4px;top:564.5px;transform:scaleX(0.9736);">Platform)</span>
<div style="position:absolute;left:795px;top:94px;width:198px;height:601px;background:#fff"></div>
<div style="position:absolute;left:795px;top:94px;width:196px;height:1px;background:#a0a0a0"></div>
<div style="position:absolute;left:795px;top:95px;width:196px;height:1px;background:#696969"></div>
<div style="position:absolute;left:795px;top:96px;width:196px;height:1px;background:#c8c8c8"></div>
<div style="position:absolute;left:795px;top:97px;width:196px;height:19px;background:#f0f0f0;border-bottom:1px solid #a0a0a0"></div>
<div style="position:absolute;left:795px;top:118px;width:196px;height:25px;background:linear-gradient(#bad1ea,#9cb8d9)"></div>
<div style="position:absolute;left:991px;top:94px;width:2px;height:601px;background:#f0f0f0;border-left:1px solid #e6e6e6;box-sizing:border-box"></div>
<svg class="ic" style="left:974.500px;top:127.500px" width="10" height="6" viewBox="0 0 10 6"><path d="M0 5.800L5 .3l5 5.500z" fill="#000"/></svg>
<svg class="ic" style="left:978px;top:149px" width="6" height="11" viewBox="0 0 6 11"><path d="M0 0l5.500 5.300L0 10.600z" fill="#000"/></svg>
<span class="t s" style="left:800px;top:97.5px;">Actions</span>
<span class="t s" style="left:800px;top:122.5px;">Device Manager</span>
<span class="t s" style="left:841px;top:146.5px;transform:scaleX(0.9586);">More Actions</span>
<div class="dlg" style="left:503px;top:50px;width:400px;height:455px">
<div class="tbar" style="height:30px"></div>
</div>
<span class="t s" style="left:512.5px;top:57.5px;transform:scaleX(0.8576);color:#999;">USB18F</span><span class="t s" style="left:555.4px;top:57.5px;transform:scaleX(0.7858);color:#999;">USB</span><span class="t s" style="left:578.4px;top:57.5px;transform:scaleX(1.0507);color:#999;">Communication</span><span class="t s" style="left:670.3px;top:57.5px;transform:scaleX(0.8559);color:#999;">Device</span><span class="t s" style="left:706.8px;top:57.5px;transform:scaleX(0.8610);color:#999;">(x64</span><span class="t s" style="left:731.4px;top:57.5px;transform:scaleX(0.9736);color:#999;">Platform)</span><span class="t s" style="left:783px;top:57.5px;transform:scaleX(0.9506);color:#999;">Properties</span>
<svg class="ic" style="left:881.700px;top:59.500px" width="11" height="11" viewBox="0 0 11 11"><path d="M0.400 0.400l10 10M10.400 0.400l-10 10" stroke="#6a6a6a" stroke-width="1" fill="none"/></svg>
<div style="position:absolute;left:510px;top:108px;width:384px;height:359px;background:#fff;border:1px solid #dadada;box-sizing:border-box"></div>
<div style="position:absolute;left:512px;top:90px;width:48px;height:18px;background:#f0f0f0;border:1px solid #dadada;border-bottom:0;box-sizing:border-box"></div>
<span class="t d" style="left:518px;top:91.5px;transform:scaleX(0.9198);">General</span>
<div style="position:absolute;left:559px;top:88px;width:46px;height:21px;background:#fff;border:1px solid #dadada;border-bottom:0;box-sizing:border-box"></div>
<span class="t d" style="left:567.5px;top:89.2px;transform:scaleX(0.9372);">Driver</span>
<div style="position:absolute;left:604px;top:90px;width:43px;height:18px;background:#f0f0f0;border:1px solid #dadada;border-bottom:0;box-sizing:border-box"></div>
<span class="t d" style="left:609px;top:91.5px;transform:scaleX(0.9219);">Details</span>
<div style="position:absolute;left:646px;top:90px;width:44px;height:18px;background:#f0f0f0;border:1px solid #dadada;border-bottom:0;box-sizing:border-box"></div>
<span class="t d" style="left:653px;top:91.5px;transform:scaleX(0.9512);">Events</span>
<svg class="ic" style="left:526px;top:129px" width="32" height="18" viewBox="0 0 32 18"><path d="M27 3.900L30.200 2.700" stroke="#484848" stroke-width="2.500" stroke-linecap="round"/><path d="M5.300 5.200L17.300 1.400 27.300 3.300V9.600L14.900 14.200 14.900 7.600z" fill="#2b2b2b" stroke="#2b2b2b" stroke-width=".3"/><path d="M5.300 5.200L17.300 1.400 27.300 3.300 14.900 7.500z" fill="#474747"/><path d="M1 8.200L5.300 5.200 14.900 7.600 9.700 10.600z" fill="#bdbdbd"/><path d="M9.700 10.600L14.900 7.600V12.300L9.700 14.700z" fill="#e9e9e9"/><path d="M1 8.200L9.700 10.600V14.700L1.200 12.600z" fill="#2e2e2e"/><path d="M2.900 9.900l1.900 .5v1.700l-1.900-.5zM6.400 10.900l1.900 .5v1.700l-1.900-.5z" fill="#b8b8b8"/></svg>
<span class="t d" style="left:570.5px;top:123.5px;transform:scaleX(0.9332);">USB18F</span><span class="t d" style="left:614px;top:123.5px;transform:scaleX(0.8707);">USB</span><span class="t d" style="left:637.8px;top:123.5px;transform:scaleX(0.9330);">Communication</span><span class="t d" style="left:713.7px;top:123.5px;transform:scaleX(0.9576);">Device</span><span class="t d" style="left:750.4px;top:123.5px;transform:scaleX(0.8969);">(x64</span><span class="t d" style="left:773.9px;top:123.5px;transform:scaleX(0.8964);">Platform)</span>
<span class="t d" style="left:570.3px;top:167.5px;transform:scaleX(0.9515);">Driver Provider:</span>
<span class="t d" style="left:663.8px;top:167.5px;transform:scaleX(0.9494);">mikroElektronika</span>
<span class="t d" style="left:570.3px;top:189.5px;transform:scaleX(0.9491);">Driver Date:</span>
<span class="t d" style="left:663.8px;top:189.5px;transform:scaleX(1.0479);">15/04/2008</span>
<span class="t d" style="left:570.3px;top:212.5px;transform:scaleX(0.9384);">Driver Version:</span>
<span class="t d" style="left:663.8px;top:212.5px;transform:scaleX(0.9769);">6.0.6001.18000</span>
<span class="t d" style="left:570.3px;top:235.5px;transform:scaleX(0.9374);">Digital Signer:</span>
<span class="t d" style="left:663.8px;top:235.5px;transform:scaleX(0.9617);">MikroElektronika</span>
<div class="btn" style="left:526px;top:274px;width:103px;height:22px"></div>
<span class="t d" style="left:546.3px;top:276.5px;transform:scaleX(0.9407);">Driver Details</span>
<div class="desc" style="left:651px;top:278px">To view details about the driver files.</div>
<div class="btn" style="left:526px;top:311px;width:103px;height:22px"></div>
<span class="t d" style="left:540.4px;top:313.5px;transform:scaleX(0.9683);">Update Driver...</span>
<div class="desc" style="left:651px;top:315px">To update the driver software for this device.</div>
<div class="btn dis" style="left:526px;top:348px;width:103px;height:22px"></div>
<span class="t d" style="left:539.2px;top:350.5px;transform:scaleX(0.9739);color:#838383;">Roll Back Driver</span>
<div class="desc" style="left:651px;top:346px">If the device fails after updating the driver, roll<br>back to the previously installed driver.</div>
<div class="btn" style="left:526px;top:389px;width:103px;height:22px"></div>
<span class="t d" style="left:560.3px;top:391.5px;transform:scaleX(0.9213);">Disable</span>
<div class="desc" style="left:651px;top:393px">Disables the selected device.</div>
<div class="btn" style="left:526px;top:430px;width:103px;height:22px"></div>
<span class="t d" style="left:557.7px;top:432.5px;transform:scaleX(0.9197);">Uninstall</span>
<div class="desc" style="left:651px;top:434px">To uninstall the driver (Advanced).</div>
<div class="dlg" style="left:654px;top:274px;width:338px;height:437px">
<div class="tbar" style="height:30px"></div>
</div>
<span class="t s" style="left:663.3px;top:281.5px;transform:scaleX(0.9473);color:#999;">Driver File Details</span>
<svg class="ic" style="left:970.600px;top:283.500px" width="11" height="11" viewBox="0 0 11 11"><path d="M0.400 0.400l10 10M10.400 0.400l-10 10" stroke="#6a6a6a" stroke-width="1" fill="none"/></svg>
<svg class="ic" style="left:667px;top:324px" width="32" height="18" viewBox="0 0 32 18"><path d="M27 3.900L30.200 2.700" stroke="#484848" stroke-width="2.500" stroke-linecap="round"/><path d="M5.300 5.200L17.300 1.400 27.300 3.300V9.600L14.900 14.200 14.900 7.600z" fill="#2b2b2b" stroke="#2b2b2b" stroke-width=".3"/><path d="M5.300 5.200L17.300 1.400 27.300 3.300 14.900 7.500z" fill="#474747"/><path d="M1 8.200L5.300 5.200 14.900 7.600 9.700 10.600z" fill="#bdbdbd"/><path d="M9.700 10.600L14.900 7.600V12.300L9.700 14.700z" fill="#e9e9e9"/><path d="M1 8.200L9.700 10.600V14.700L1.200 12.600z" fill="#2e2e2e"/><path d="M2.900 9.900l1.900 .5v1.700l-1.900-.5zM6.400 10.900l1.900 .5v1.700l-1.900-.5z" fill="#b8b8b8"/></svg>
<span class="t d" style="left:711.5px;top:326.5px;transform:scaleX(0.9332);">USB18F</span><span class="t d" style="left:755px;top:326.5px;transform:scaleX(0.8707);">USB</span><span class="t d" style="left:778.8px;top:326.5px;transform:scaleX(0.9330);">Communication</span><span class="t d" style="left:854.7px;top:326.5px;transform:scaleX(0.9576);">Device</span><span class="t d" style="left:891.4px;top:326.5px;transform:scaleX(0.8969);">(x64</span><span class="t d" style="left:914.9px;top:326.5px;transform:scaleX(0.8964);">Platform)</span>
<span class="t d" style="left:666.5px;top:362.5px;transform:scaleX(0.9288);">Driver files:</span>
<div style="position:absolute;left:666px;top:380px;width:314px;height:130px;background:#fff;border:1px solid #828790;box-sizing:border-box"></div>
<div style="position:absolute;left:668px;top:382px;width:310px;height:17px;background:#d9d9d9"></div>
<svg class="ic" style="left:671px;top:382px" width="16" height="16" viewBox="0 0 16 16"><rect x="1.500" y="2.500" width="15" height="11" fill="#fff" stroke="#8a8a8a" stroke-width="1"/><rect x="3.500" y="4.500" width="11" height="7" rx="1.200" fill="#fff" stroke="#f0b400" stroke-width="1.200"/><path d="M6 6.600h6M6 9.200h6" stroke="#8c94a0" stroke-width=".9"/><path d="M11.800 12.600l-.5 3.800 1.900-1.100 .4-2.200zM15.600 12.600l.5 3.800-1.900-1.100-.4-2.200z" fill="#1c78d8"/><circle cx="13.800" cy="11.400" r="2.700" fill="#f0a810"/><circle cx="13.800" cy="11.400" r="1.300" fill="#f8c840"/></svg>
<span class="t d" style="left:689.5px;top:382.5px;transform:scaleX(1.0738);">C:\</span><span class="t d" style="left:704.8px;top:382.5px;transform:scaleX(1.0635);">WINDOWS\</span><span class="t d" style="left:767.5px;top:382.5px;transform:scaleX(0.9602);">System32\</span><span class="t d" style="left:817.6px;top:382.5px;transform:scaleX(0.9950);">Drivers\</span><span class="t d" style="left:855.5px;top:382.5px;transform:scaleX(0.9470);">USB18PRG.sys</span>
<span class="t d" style="left:676.2px;top:522px;transform:scaleX(0.9380);">Provider:</span>
<span class="t d" style="left:753.9px;top:522px;transform:scaleX(0.9482);">mikroElektronika</span>
<span class="t d" style="left:676.2px;top:548px;transform:scaleX(0.9242);">File version:</span>
<span class="t d" style="left:676.2px;top:574px;transform:scaleX(0.9334);">Copyright:</span>
<span class="t d" style="left:676.2px;top:600px;transform:scaleX(0.9389);">Digital Signer:</span>
<span class="t d" style="left:753.9px;top:600px;transform:scaleX(0.9605);">MikroElektronika</span>
<span class="t d" style="left:754.2px;top:548px;transform:scaleX(0.9703);">6.0.6000.16386</span><span class="t d" style="left:831.6px;top:548px;transform:scaleX(0.7975);">built</span><span class="t d" style="left:851.7px;top:548px;transform:scaleX(1.0417);">by:</span><span class="t d" style="left:871.3px;top:548px;transform:scaleX(0.9817);">WinDDK</span>
<span class="t d" style="left:765.4px;top:574px;transform:scaleX(0.9240);">Copyright</span><span class="t d" style="left:825.3px;top:574px;transform:scaleX(0.9516);">2007</span><span class="t d" style="left:851.8px;top:574px;transform:scaleX(0.9457);">mikroElektronika</span>
<span class="t d" style="left:754.3px;top:572.500px;font-size:10px;transform:scaleX(1.150);transform-origin:0 0">©</span>
<span class="t d" style="left:813.3px;top:572.500px;font-size:10px;transform:scaleX(1.150);transform-origin:0 0">©</span>
<div class="btn" style="left:907px;top:677px;width:73px;height:21px"></div>
<span class="t d" style="left:935.7px;top:679.6px;transform:scaleX(0.9745);">OK</span>
</body></html>
